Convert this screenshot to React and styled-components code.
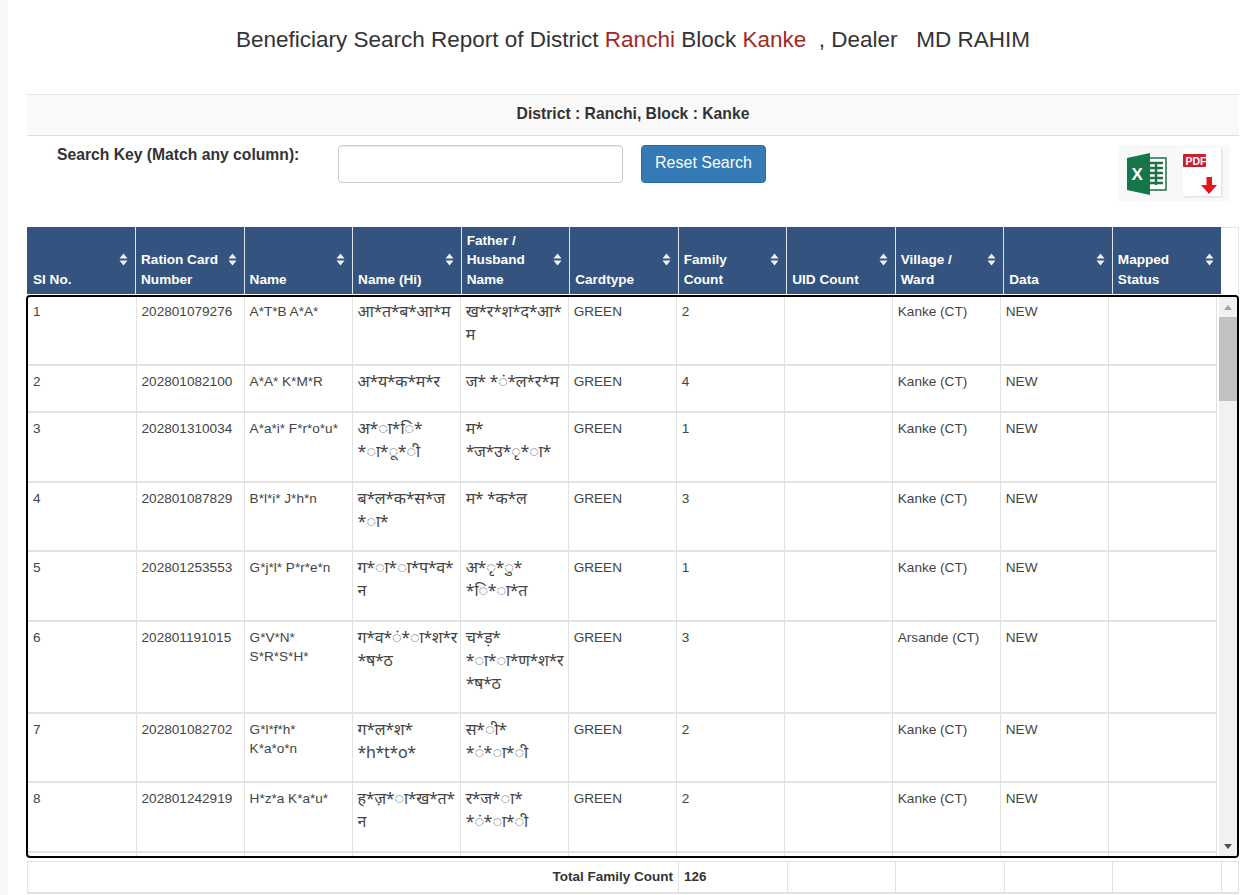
import React from "react";
import styled, { createGlobalStyle } from "styled-components";

const Global = createGlobalStyle`
  html, body {
    margin: 0;
    padding: 0;
    height: 895px;
    overflow: hidden;
    background: #f7f7f7;
    font-family: "Liberation Sans", Arial, sans-serif;
    color: #333;
  }
`;

const Page = styled.div`
  margin-left: 8px;
  height: 895px;
  padding: 0 19px;
  background: #fff;
`;

const Title = styled.h2`
  margin: 0;
  padding-top: 27px;
  height: 94px;
  box-sizing: border-box;
  font-size: 22.5px;
  line-height: 26px;
  font-weight: 400;
  text-align: center;
  white-space: pre;
`;

const Place = styled.span`
  color: #a0291f;
`;

const Heading = styled.div`
  height: 42px;
  box-sizing: border-box;
  border-top: 1px solid #e6e6e6;
  border-bottom: 1px solid #ddd;
  background: #f9f9f9;
  font-size: 15.7px;
  font-weight: 700;
  line-height: 38px;
  text-align: center;
`;

const SearchRow = styled.div`
  display: flex;
  align-items: flex-start;
  padding: 9px 9px 0 30px;
  height: 91px;
  box-sizing: border-box;
`;

const SearchLabel = styled.label`
  width: 281px;
  font-size: 15.7px;
  font-weight: 700;
  line-height: 20px;
`;

const SearchInput = styled.input`
  width: 285px;
  height: 38px;
  box-sizing: border-box;
  border: 1px solid #ccc;
  border-radius: 4px;
  background: #fff;
  box-shadow: inset 0 1px 1px rgba(0, 0, 0, 0.075);
`;

const ResetButton = styled.button`
  width: 125px;
  height: 38px;
  margin-left: 18px;
  padding: 0 0 3px;
  border: 1px solid #2e6da4;
  border-radius: 4px;
  background: #337ab7;
  color: #fff;
  font-family: inherit;
  font-size: 16px;
`;

const Exports = styled.div`
  display: flex;
  align-items: flex-start;
  margin-left: auto;
  width: 112px;
  height: 56px;
  background: #f8f8f8;
`;

const ExcelIcon = styled.svg`
  width: 42px;
  height: 42px;
  margin: 8px 0 0 8px;
`;

const PdfIcon = styled.svg`
  width: 38px;
  height: 48px;
  margin: 3px 0 0 15px;
  background: #fff;
  box-shadow: 1px 1px 2px rgba(0, 0, 0, 0.12);
`;

const HeadWrap = styled.div`
  display: flex;
  height: 67px;
`;

const Grid = styled.table`
  width: ${(p) => p.$width};
  table-layout: fixed;
  border-collapse: collapse;
  font-size: 13.6px;
`;

const HeadCell = styled.th`
  position: relative;
  height: 67px;
  box-sizing: border-box;
  padding: 0 22px 5px 5px;
  border-left: 1px solid #dfe5ec;
  background: #34537f;
  color: #fff;
  font-weight: 700;
  line-height: 19.4px;
  text-align: left;
  vertical-align: bottom;
  white-space: pre-line;
  &:first-child {
    border-left: none;
    padding-left: 6px;
  }
`;

const SortMark = styled.svg`
  position: absolute;
  top: 26px;
  right: 7px;
  width: 9px;
  height: 13px;
`;

const HeadRest = styled.div`
  flex: 1;
  border: 1px solid #e4e4e4;
  border-bottom: none;
  border-left: none;
`;

const ScrollBox = styled.div`
  display: flex;
  height: 559px;
  margin: 1px 0 3px -1px;
  overflow: hidden;
  border: 2px solid #000;
  border-radius: 4px;
  background: #fff;
`;

const BodyArea = styled.div`
  flex: 1;
  min-width: 0;
  overflow: hidden;
`;

const ScrollTrack = styled.div`
  display: flex;
  flex-direction: column;
  flex: none;
  width: 18px;
  background: #f1f1f1;
`;

const ScrollThumb = styled.div`
  height: 84px;
  background: #c1c1c1;
`;

const ScrollButton = styled.div`
  display: flex;
  align-items: center;
  justify-content: center;
  height: 20px;
  margin-top: ${(p) => (p.$down ? "auto" : "0")};
  &::before {
    content: "";
    border-left: 4px solid transparent;
    border-right: 4px solid transparent;
    border-bottom: ${(p) => (p.$down ? "0" : "5px solid #a3a3a3")};
    border-top: ${(p) => (p.$down ? "5px solid #505050" : "0")};
  }
`;

const Cell = styled.td`
  padding: 6px 3px 0 5px;
  border: 2px solid #e2e2e2;
  border-top: none;
  border-left: none;
  border-right-width: 1px;
  color: #444;
  line-height: 19.4px;
  vertical-align: top;
  white-space: pre-line;
  height: ${(p) => p.$height}px;
  box-sizing: border-box;
  tr:first-child > & {
    padding-top: 5px;
  }
`;

const Hindi = styled.span`
  display: block;
  margin-top: -2px;
  font-family: "Noto Sans", "Noto Sans Devanagari", "Liberation Sans", sans-serif;
  font-size: 16px;
  letter-spacing: -0.35px;
  line-height: 23px;
`;

const FootCell = styled.td`
  height: 31px;
  box-sizing: border-box;
  padding: 0 5px;
  border-left: 1px solid #e2e2e2;
  font-size: 13.5px;
  font-weight: 700;
  text-align: ${(p) => (p.$right ? "right" : "left")};
`;

const FootTable = styled(Grid)`
  border-top: 1px solid #e2e2e2;
  border-bottom: 2px solid #e2e2e2;
  border-right: 1px solid #e2e2e2;
`;

const headers = [
  "SI No.",
  "Ration Card Number",
  "Name",
  "Name (Hi)",
  "Father /\nHusband Name",
  "Cardtype",
  "Family Count",
  "UID Count",
  "Village /\nWard",
  "Data",
  "Mapped Status",
];

const people = [
  ["202801079276", "A*T*B A*A*", "आ*त*ब*आ*म", "ख*र*श*द*आ*\nम", "2", "Kanke (CT)", 68],
  ["202801082100", "A*A* K*M*R", "अ*य*क*म*र", "ज* *ं*ल*र*म", "4", "Kanke (CT)", 47],
  ["202801310034", "A*a*i* F*r*o*u*", "अ*ा*ि*\n*ा*ू*ी", "म*\n*ज*उ*ृ*ा*", "1", "Kanke (CT)", 70],
  ["202801087829", "B*l*i* J*h*n", "ब*ल*क*स*ज\n*ा*", "म* *क*ल", "3", "Kanke (CT)", 69],
  ["202801253553", "G*j*l* P*r*e*n", "ग*ा*ा*प*व*\nन", "अ*ृ*ु*\n*ि*ा*त", "1", "Kanke (CT)", 70],
  ["202801191015", "G*V*N*\nS*R*S*H*", "ग*व*ं*ा*श*र\n*ष*ठ", "च*ड़*\n*ा*ा*ण*श*र\n*ष*ठ", "3", "Arsande (CT)", 92],
  ["202801082702", "G*l*f*h*\nK*a*o*n", "ग*ल*श*\n*h*t*o*", "स*ी*\n*ं*ा*ी", "2", "Kanke (CT)", 69],
  ["202801242919", "H*z*a K*a*u*", "ह*ज़*ा*ख*त*\nन", "र*ज*ा*\n*ं*ा*ी", "2", "Kanke (CT)", 70],
];

const SortIcon = () => (
  <SortMark viewBox="0 0 9 13">
    <path d="M4.5 0.5 L8.5 5.5 H0.5 Z M4.5 12.5 L0.5 7.5 H8.5 Z" fill="#eef1f5" />
  </SortMark>
);

const Excel = () => (
  <ExcelIcon viewBox="0 0 42 42">
    <rect x="18" y="5" width="22" height="32" fill="#fff" stroke="#1d7145" strokeWidth="1.5" />
    <path
      d="M24 10h13M24 15h13M24 20h13M24 25h13M24 30h13M30 10v22"
      stroke="#1d7145"
      strokeWidth="2.4"
      fill="none"
    />
    <path d="M1 5 L24 0 V42 L1 37 Z" fill="#17754a" />
    <text x="5.5" y="27" fill="#fff" fontFamily="Liberation Sans" fontWeight="700" fontSize="17">X</text>
  </ExcelIcon>
);

const Pdf = () => (
  <PdfIcon viewBox="0 0 38 48">
    <rect x="0" y="6" width="23" height="13" rx="1" fill="#c8202f" />
    <text x="2.5" y="16.5" fill="#fff" fontFamily="Liberation Sans" fontWeight="700" fontSize="10.5">PDF</text>
    <path d="M23.5 29h5.500v8h5l-8 9-8-9h5.500z" fill="#e8121c" />
  </PdfIcon>
);

const App = () => (
  <Page>
    <Global />
    <Title>
      Beneficiary Search Report of District <Place>Ranchi</Place> Block <Place>Kanke</Place>
      {"  , Dealer   MD RAHIM"}
    </Title>
    <Heading>District : Ranchi, Block : Kanke</Heading>

    <SearchRow>
      <SearchLabel>Search Key (Match any column):</SearchLabel>
      <SearchInput type="text" />
      <ResetButton>Reset Search</ResetButton>
      <Exports>
        <Excel />
        <Pdf />
      </Exports>
    </SearchRow>

    <HeadWrap>
      <Grid $width="1194px">
        <thead>
          <tr>
            {headers.map((h) => (
              <HeadCell key={h}>
                {h}
                <SortIcon />
              </HeadCell>
            ))}
          </tr>
        </thead>
      </Grid>
      <HeadRest />
    </HeadWrap>

    <ScrollBox>
      <BodyArea>
        <Grid $width="1189px">
          <tbody>
            {people.map((r, i) => (
              <tr key={i}>
                <Cell $height={r[6]}>{i + 1}</Cell>
                <Cell>{r[0]}</Cell>
                <Cell>{r[1]}</Cell>
                <Cell><Hindi>{r[2]}</Hindi></Cell>
                <Cell><Hindi>{r[3]}</Hindi></Cell>
                <Cell>GREEN</Cell>
                <Cell>{r[4]}</Cell>
                <Cell />
                <Cell>{r[5]}</Cell>
                <Cell>NEW</Cell>
                <Cell />
              </tr>
            ))}
            <tr>
              {headers.map((h) => (
                <Cell key={h} $height={20} />
              ))}
            </tr>
          </tbody>
        </Grid>
      </BodyArea>
      <ScrollTrack>
        <ScrollButton />
        <ScrollThumb />
        <ScrollButton $down />
      </ScrollTrack>
    </ScrollBox>

    <FootTable $width="100%">
      <colgroup>
        <col style={{ width: "651px" }} />
        <col style={{ width: "109px" }} />
        <col style={{ width: "108px" }} />
        <col style={{ width: "109px" }} />
        <col style={{ width: "108px" }} />
        <col style={{ width: "109px" }} />
        <col />
      </colgroup>
      <tbody>
        <tr>
          <FootCell $right>Total Family Count</FootCell>
          <FootCell>126</FootCell>
          <FootCell />
          <FootCell />
          <FootCell />
          <FootCell />
          <FootCell />
        </tr>
      </tbody>
    </FootTable>
  </Page>
);

export default App;
